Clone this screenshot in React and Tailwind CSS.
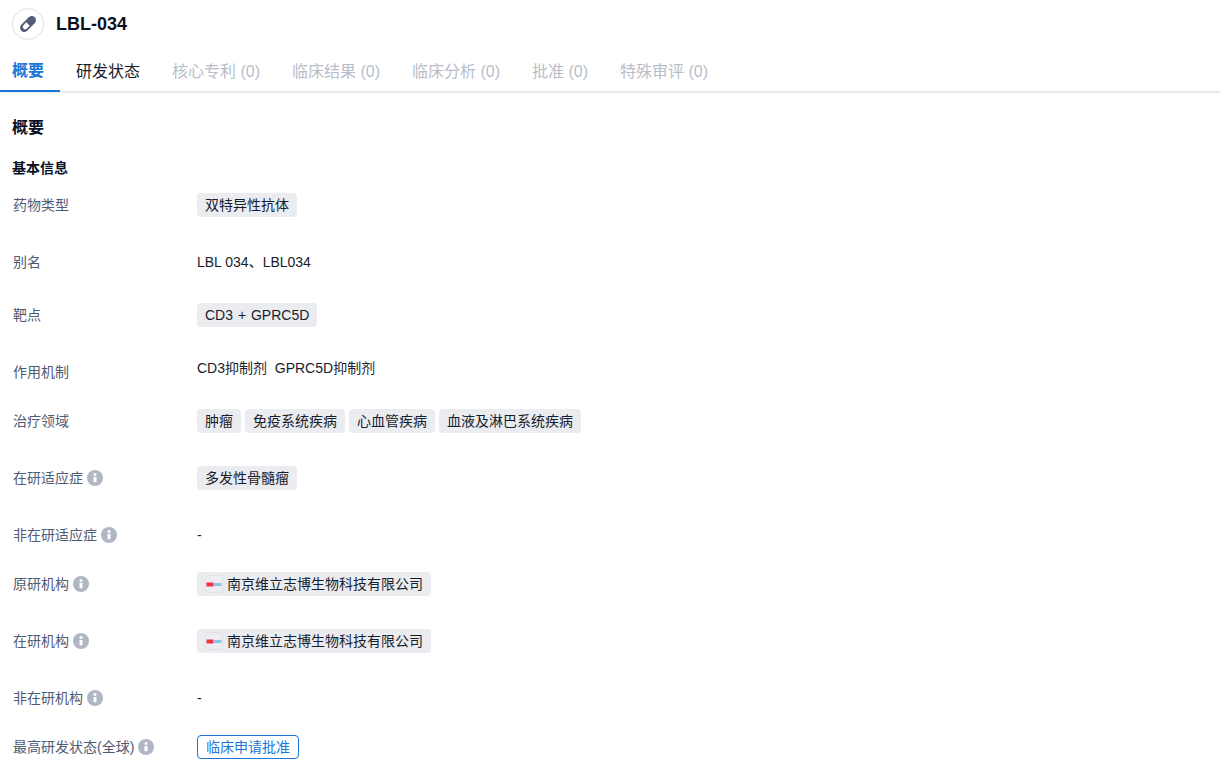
const FONT = "font-['Liberation_Sans','Noto_Sans_CJK_SC',sans-serif]";

function Info() {
  return (
    <svg width="16" height="16" viewBox="0 0 16 16" className="ml-1 shrink-0">
      <circle cx="8" cy="8" r="8" fill="#b0b6c4" />
      <rect x="6.5" y="7" width="3" height="5.2" rx="0.4" fill="#fff" />
      <circle cx="8" cy="4.6" r="1.5" fill="#fff" />
    </svg>
  );
}

function Tag({ children }) {
  return (
    <span className="inline-flex h-6 items-center rounded bg-[#ebecf0] px-2 text-sm text-[#181d2b]">{children}</span>
  );
}

function OrgTag({ children }) {
  return (
    <span className="inline-flex h-6 items-center rounded bg-[#ebecf0] pl-2 pr-2 text-sm text-[#181d2b]">
      <span className="mr-1 flex h-[18px] w-[18px] items-center justify-center rounded border border-[#e0e2e8] bg-[#eceef2]">
        <svg width="16" height="5" viewBox="0 0 16 5">
          <rect x="0.5" y="0.5" width="7" height="4" fill="#f5333f" />
          <rect x="7.5" y="1" width="8" height="3" fill="#8cc4ea" />
        </svg>
      </span>
      {children}
    </span>
  );
}

function Row({ label, info, height, children }) {
  return (
    <div className={`flex items-start ${height}`}>
      <div className="flex h-6 w-[185px] shrink-0 items-center pl-[1px] text-sm text-[#4f5a73]">
        {label}
        {info && <Info />}
      </div>
      <div className="flex flex-wrap gap-1 text-sm text-[#181d2b]">{children}</div>
    </div>
  );
}

const tabs = [
  ["研发状态", "text-[#181d2b]"],
  ["核心专利 (0)", "text-[#b8bdc9]"],
  ["临床结果 (0)", "text-[#b8bdc9]"],
  ["临床分析 (0)", "text-[#b8bdc9]"],
  ["批准 (0)", "text-[#b8bdc9]"],
  ["特殊审评 (0)", "text-[#b8bdc9]"],
];

export default function App() {
  return (
    <div className={`${FONT} h-[776px] overflow-hidden bg-white`}>
      <div className="flex h-12 items-center gap-3 px-3">
        <span className="flex h-8 w-8 items-center justify-center rounded-full border border-[#dfe1e8] bg-white">
          <svg width="20" height="20" viewBox="0 0 20 20">
            <g transform="rotate(-45 10 10)">
              <rect x="0.5" y="5.8" width="19" height="8.4" rx="4.2" fill="#535d77" />
              <path d="M10 7.6H6a2.4 2.4 0 0 0 0 4.8h4z" fill="#fff" />
            </g>
          </svg>
        </span>
        <span className="text-lg font-bold text-[#0b1024]">LBL-034</span>
      </div>
      <div className="flex h-[44px] border-b border-[#e4e6ea] shadow-[0_2px_2px_-1px_rgba(0,0,0,0.1)]">
        <div className="flex h-[44px] items-center border-b-2 border-[#1a77d9] pl-3 pr-4 pt-1 text-base font-bold text-[#1a77d9]">概要</div>
        {tabs.map(([t, c]) => (
          <div key={t} className={`flex h-[44px] items-center px-4 pt-1 text-base ${c}`}>{t}</div>
        ))}
      </div>
      <div className="px-3">
        <h2 className="mt-[24px] h-6 text-base font-bold leading-6 text-[#0b1024]">概要</h2>
        <h3 className="mt-[18px] h-[20px] text-sm font-bold leading-5 text-[#0b1024]">基本信息</h3>
        <div className="mt-[15px]">
          <Row label="药物类型" height="h-[57px]"><Tag>双特异性抗体</Tag></Row>
          <Row label="别名" height="h-[53px]"><span className="leading-6">LBL 034、LBL034</span></Row>
          <Row label="靶点" height="h-[57px]"><Tag><span className="[word-spacing:1px]">CD3 + GPRC5D</span></Tag></Row>
          <Row label="作用机制" height="h-[49px]"><span className="leading-4">CD3抑制剂&nbsp;&nbsp;GPRC5D抑制剂</span></Row>
          <Row label="治疗领域" height="h-[57px]">
            <Tag>肿瘤</Tag><Tag>免疫系统疾病</Tag><Tag>心血管疾病</Tag><Tag>血液及淋巴系统疾病</Tag>
          </Row>
          <Row label="在研适应症" info height="h-[57px]"><Tag>多发性骨髓瘤</Tag></Row>
          <Row label="非在研适应症" info height="h-[49px]"><span className="leading-6">-</span></Row>
          <Row label="原研机构" info height="h-[57px]"><OrgTag>南京维立志博生物科技有限公司</OrgTag></Row>
          <Row label="在研机构" info height="h-[57px]"><OrgTag>南京维立志博生物科技有限公司</OrgTag></Row>
          <Row label="非在研机构" info height="h-[49px]"><span className="leading-6">-</span></Row>
          <Row label="最高研发状态(全球)" info height="h-[41px]">
            <span className="inline-flex h-6 items-center rounded border border-[#1a77d9] px-2 text-sm text-[#1a77d9]">临床申请批准</span>
          </Row>
        </div>
      </div>
    </div>
  );
}
